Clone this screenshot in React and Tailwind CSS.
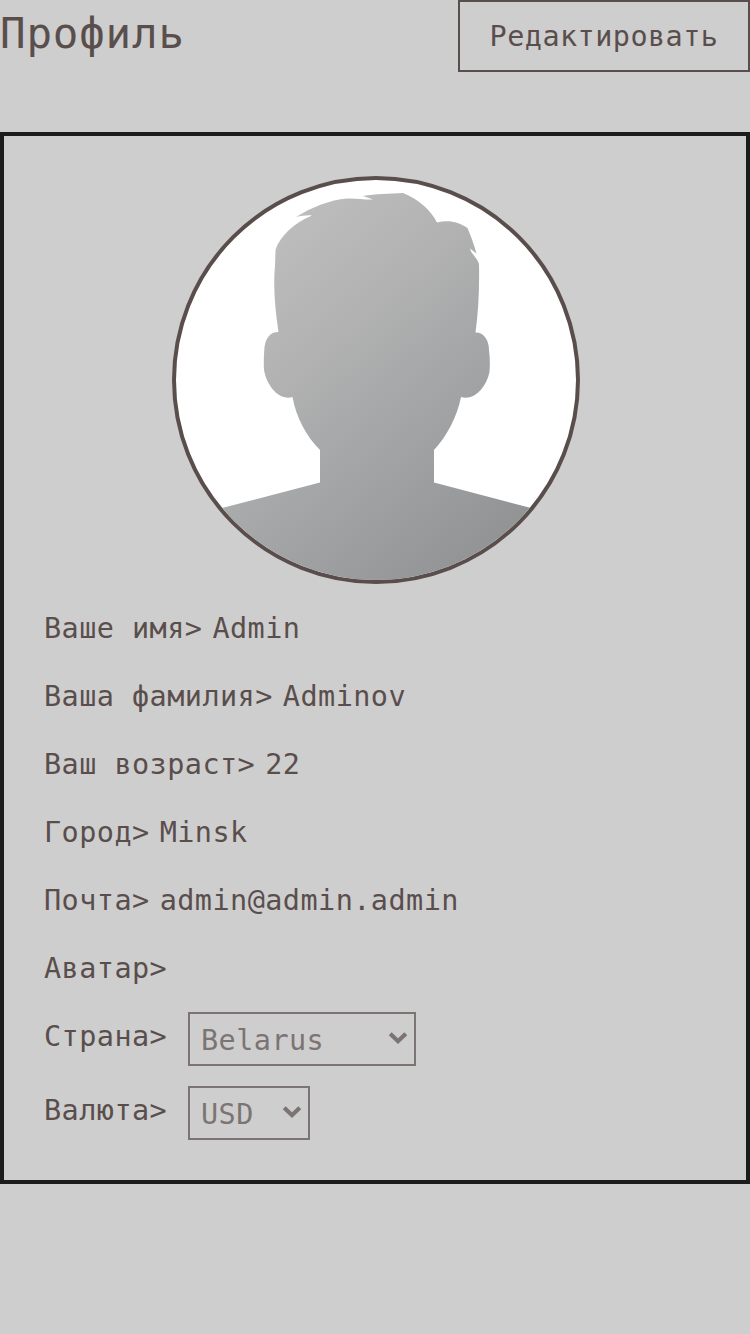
const profile = [
  ["Ваше имя", "Admin"],
  ["Ваша фамилия", "Adminov"],
  ["Ваш возраст", "22"],
  ["Город", "Minsk"],
  ["Почта", "admin@admin.admin"],
  ["Аватар", ""],
];

function Avatar() {
  return (
    <div className="ml-[128px] size-[408px] shrink-0 overflow-hidden rounded-full border-4 border-[#5a4e4d] bg-white">
      <svg viewBox="176 180 400 400" className="block size-full">
        <defs>
          <linearGradient id="skin" gradientUnits="userSpaceOnUse" x1="235" y1="230" x2="500" y2="530">
            <stop offset="0" stopColor="#bebfbe" />
            <stop offset="0.38" stopColor="#b0b1b0" />
            <stop offset="0.52" stopColor="#a9aaab" />
            <stop offset="0.7" stopColor="#a0a2a3" />
            <stop offset="1" stopColor="#929495" />
          </linearGradient>
        </defs>
        <path
          fill="url(#skin)"
          d="M296 217 C312 207 330 200 347 198.500 C356 198 365 200 373 199.500 L363 196 C375 194 390 193.500 403 193 C418 199 430 209 437 222.500 C447 219.500 459 221.500 467.500 228 C471 236 474 245 476.500 253.500 L470 248.500 C471 254 477 257 479 264 C479.500 287 478.500 311 475.500 332.500 C482 332 489 338 489 350 C490 358 490 365 489.500 372 C486 388 474 401 461 397 C457 417 447 436 434 450 L434 482.500 L531 508 L576 530 L576 580 L176 580 L176 530 L222 508 L320 482.500 L320 450 C306 436 296 417 292.500 397 C280 401 267 387 264 370 C263.500 362 264 354 264.500 347 C266 338 270 332 278.500 332 C275 309 273 285 275 266 L275.500 250 C280 236 294 223 312 215.500 C307 215 301 216 296 217Z"
        />
      </svg>
    </div>
  );
}

function SelectRow({ label, value, size }) {
  return (
    <div className="flex h-[54px]">
      <span className="w-36 pt-[9px] leading-8">{label}&gt;</span>
      <div className={`flex justify-between border-2 border-current pr-1.5 pl-[11px] opacity-70 ${size}`}>
        <span className="pt-[11px] leading-8">{value}</span>
        <svg viewBox="0 0 20 16" className="mt-[15px] h-4 w-5" fill="none" stroke="currentColor" strokeWidth="4.200">
          <path d="M2.200 4.800 L10 12.200 L17.800 4.800" />
        </svg>
      </div>
    </div>
  );
}

export default function App() {
  return (
    <main className="min-h-screen bg-[#cecece] font-['DejaVu_Sans_Mono',monospace] text-[28.5px] tracking-[0.442px] text-[#5a4e4d]">
      <header className="flex h-[72px] items-start justify-between">
        <h1 className="pt-1.5 text-[42.5px] leading-[56px] tracking-[0.813px]">Профиль</h1>
        <button className="h-[72px] w-[292px] border-2 border-current pt-0.5 text-center leading-8 tracking-[0.442px]">Редактировать</button>
      </header>
      <section className="mt-[60px] flex h-[1052px] flex-col border-4 border-[#1c1c1c] p-10">
        <Avatar />
        <div className="mt-[11px]">
          {profile.map(([label, value]) => (
            <div key={label} className="flex h-[68px] items-center gap-2.5 whitespace-pre leading-8">
              <span>{label}&gt;</span>
              <span>{value}</span>
            </div>
          ))}
        </div>
        <div className="mt-[9px] flex flex-col gap-5">
          <SelectRow label="Страна" value="Belarus" size="w-[228px]" />
          <SelectRow label="Валюта" value="USD" size="w-[122px]" />
        </div>
      </section>
    </main>
  );
}
